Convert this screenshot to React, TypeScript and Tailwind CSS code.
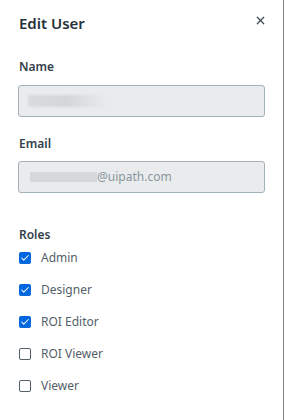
import { X, Check } from "lucide-react";

const roles = [
  { name: "Admin", checked: true },
  { name: "Designer", checked: true },
  { name: "ROI Editor", checked: true },
  { name: "ROI Viewer", checked: false },
  { name: "Viewer", checked: false },
];

function RoleRow({ name, checked }: { name: string; checked: boolean }) {
  return (
    <label className="flex items-center h-[32px] gap-[10px] pl-[1px]">
      {checked ? (
        <span className="w-[12px] h-[12px] rounded-[2px] bg-[#0067df] flex items-center justify-center">
          <Check size={10} strokeWidth={2.5} className="text-white" />
        </span>
      ) : (
        <span className="w-[12px] h-[12px] rounded-[2px] border-[1.5px] border-[#526069] bg-white" />
      )}
      <span className="text-[12px] text-[#526069]">{name}</span>
    </label>
  );
}

export default function App() {
  return (
    <div className="w-[285px] h-[420px] bg-white" style={{ fontFamily: '"Noto Sans", sans-serif' }}>
      <div className="w-[284px] h-full border-r border-[#808080] px-[18px] pt-[11px]">
        {/* Header */}
        <div className="flex items-start justify-between">
          <h1 className="text-[15px] font-semibold text-[#273139] leading-[24px] pl-[1px]">Edit User</h1>
          <button className="mt-[3px] mr-[-2px] text-[#3d4b55]">
            <X size={13} strokeWidth={2.25} />
          </button>
        </div>

        {/* Name */}
        <div className="mt-[24px] text-[12px] font-semibold text-[#33414a] leading-[16px] pl-[1px]">Name</div>
        <div className="mt-[10px] h-[32px] rounded-[3px] border border-[#a4b1b8] bg-[#e9ebec] flex items-center px-[9px]">
          <span className="w-[80px] h-[12px] bg-gradient-to-r from-[#d9dcde] via-[#d4d7d9] to-[#e9ebec] blur-[1px]" />
        </div>

        {/* Email */}
        <div className="mt-[19px] text-[12px] font-semibold text-[#33414a] leading-[16px] pl-[1px]">Email</div>
        <div className="mt-[9px] h-[32px] rounded-[3px] border border-[#a4b1b8] bg-[#e9ebec] flex items-center pl-[11px]">
          <span className="w-[67px] h-[10px] bg-[#d6d9db] blur-[0.5px]" />
          <span className="text-[12px] text-[#8a97a0]">@uipath.com</span>
        </div>

        {/* Roles */}
        <div className="mt-[34px] text-[12px] font-semibold text-[#33414a] leading-[16px] pl-[1px]">Roles</div>
        <div className="mt-[-1px] flex flex-col">
          {roles.map((r) => (
            <RoleRow key={r.name} name={r.name} checked={r.checked} />
          ))}
        </div>
      </div>
    </div>
  );
}
